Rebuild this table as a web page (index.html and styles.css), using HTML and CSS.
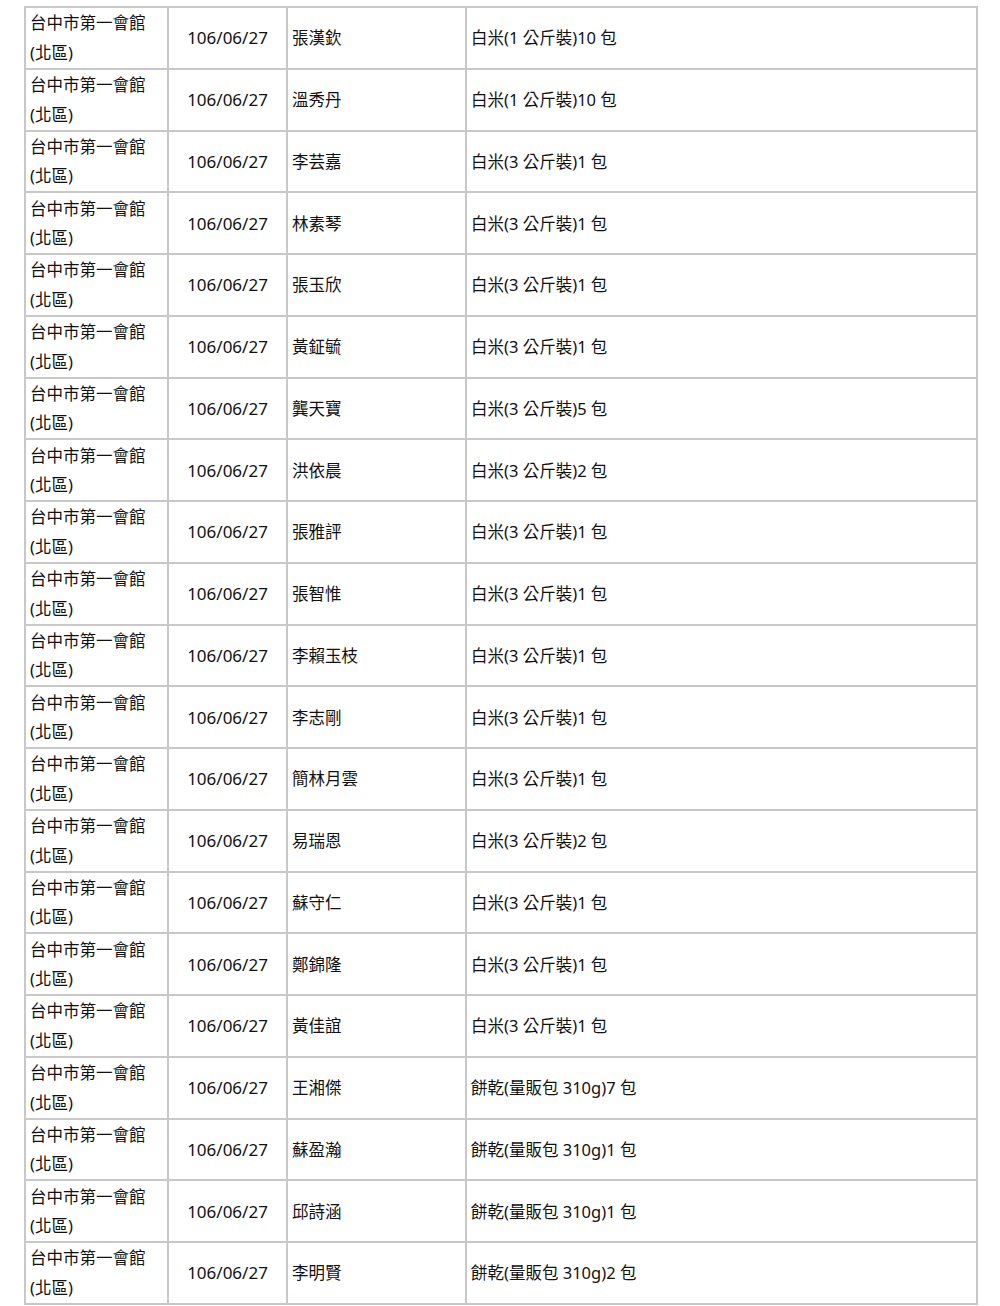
FILE: index.html
```html
<!DOCTYPE html>
<html lang="zh-Hant">
<head>
    <meta charset="UTF-8">
    <title>領取名單</title>
    <link rel="stylesheet" href="styles.css">
</head>
<body>
    <table class="list">
        <colgroup>
            <col class="c-place">
            <col class="c-date">
            <col class="c-name">
            <col class="c-item">
        </colgroup>
        <tbody>
            <tr><td class="place">台中市第一會館<br>(北區)</td><td class="date">106/06/27</td><td>張漢欽</td><td>白米(1 公斤裝)10 包</td></tr>
            <tr><td class="place">台中市第一會館<br>(北區)</td><td class="date">106/06/27</td><td>溫秀丹</td><td>白米(1 公斤裝)10 包</td></tr>
            <tr><td class="place">台中市第一會館<br>(北區)</td><td class="date">106/06/27</td><td>李芸嘉</td><td>白米(3 公斤裝)1 包</td></tr>
            <tr><td class="place">台中市第一會館<br>(北區)</td><td class="date">106/06/27</td><td>林素琴</td><td>白米(3 公斤裝)1 包</td></tr>
            <tr><td class="place">台中市第一會館<br>(北區)</td><td class="date">106/06/27</td><td>張玉欣</td><td>白米(3 公斤裝)1 包</td></tr>
            <tr><td class="place">台中市第一會館<br>(北區)</td><td class="date">106/06/27</td><td>黃鉦毓</td><td>白米(3 公斤裝)1 包</td></tr>
            <tr><td class="place">台中市第一會館<br>(北區)</td><td class="date">106/06/27</td><td>龔天寶</td><td>白米(3 公斤裝)5 包</td></tr>
            <tr><td class="place">台中市第一會館<br>(北區)</td><td class="date">106/06/27</td><td>洪依晨</td><td>白米(3 公斤裝)2 包</td></tr>
            <tr><td class="place">台中市第一會館<br>(北區)</td><td class="date">106/06/27</td><td>張雅評</td><td>白米(3 公斤裝)1 包</td></tr>
            <tr><td class="place">台中市第一會館<br>(北區)</td><td class="date">106/06/27</td><td>張智惟</td><td>白米(3 公斤裝)1 包</td></tr>
            <tr><td class="place">台中市第一會館<br>(北區)</td><td class="date">106/06/27</td><td>李賴玉枝</td><td>白米(3 公斤裝)1 包</td></tr>
            <tr><td class="place">台中市第一會館<br>(北區)</td><td class="date">106/06/27</td><td>李志剛</td><td>白米(3 公斤裝)1 包</td></tr>
            <tr><td class="place">台中市第一會館<br>(北區)</td><td class="date">106/06/27</td><td>簡林月雲</td><td>白米(3 公斤裝)1 包</td></tr>
            <tr><td class="place">台中市第一會館<br>(北區)</td><td class="date">106/06/27</td><td>易瑞恩</td><td>白米(3 公斤裝)2 包</td></tr>
            <tr><td class="place">台中市第一會館<br>(北區)</td><td class="date">106/06/27</td><td>蘇守仁</td><td>白米(3 公斤裝)1 包</td></tr>
            <tr><td class="place">台中市第一會館<br>(北區)</td><td class="date">106/06/27</td><td>鄭錦隆</td><td>白米(3 公斤裝)1 包</td></tr>
            <tr><td class="place">台中市第一會館<br>(北區)</td><td class="date">106/06/27</td><td>黃佳誼</td><td>白米(3 公斤裝)1 包</td></tr>
            <tr><td class="place">台中市第一會館<br>(北區)</td><td class="date">106/06/27</td><td>王湘傑</td><td>餅乾(量販包 310g)7 包</td></tr>
            <tr><td class="place">台中市第一會館<br>(北區)</td><td class="date">106/06/27</td><td>蘇盈瀚</td><td>餅乾(量販包 310g)1 包</td></tr>
            <tr><td class="place">台中市第一會館<br>(北區)</td><td class="date">106/06/27</td><td>邱詩涵</td><td>餅乾(量販包 310g)1 包</td></tr>
            <tr><td class="place">台中市第一會館<br>(北區)</td><td class="date">106/06/27</td><td>李明賢</td><td>餅乾(量販包 310g)2 包</td></tr>
        </tbody>
    </table>
</body>
</html>
```

FILE: styles.css
```css
body {
    margin: 6px 0 0 24px;
    background-color: #fff;
    font-family: "Noto Sans", "Noto Sans CJK TC", sans-serif;
    color: #111;
}

.list {
    width: 954px;
    table-layout: fixed;
    border-collapse: separate;
    border-spacing: 0;
    border: 1px solid #c8c8c8;
}

.c-place { width: 143px; }
.c-date { width: 119px; }
.c-name { width: 179px; }

.list tr {
    height: 61.76px;
}

.list td {
    border: 1px solid #c8c8c8;
    padding: 0 4px;
    font-size: 16.5px;
    line-height: 29px;
    vertical-align: middle;
    white-space: nowrap;
}

.list td.place {
    padding-left: 4px;
    line-height: 29.5px;
}

.list td.date {
    text-align: center;
    font-size: 17px;
}
```
